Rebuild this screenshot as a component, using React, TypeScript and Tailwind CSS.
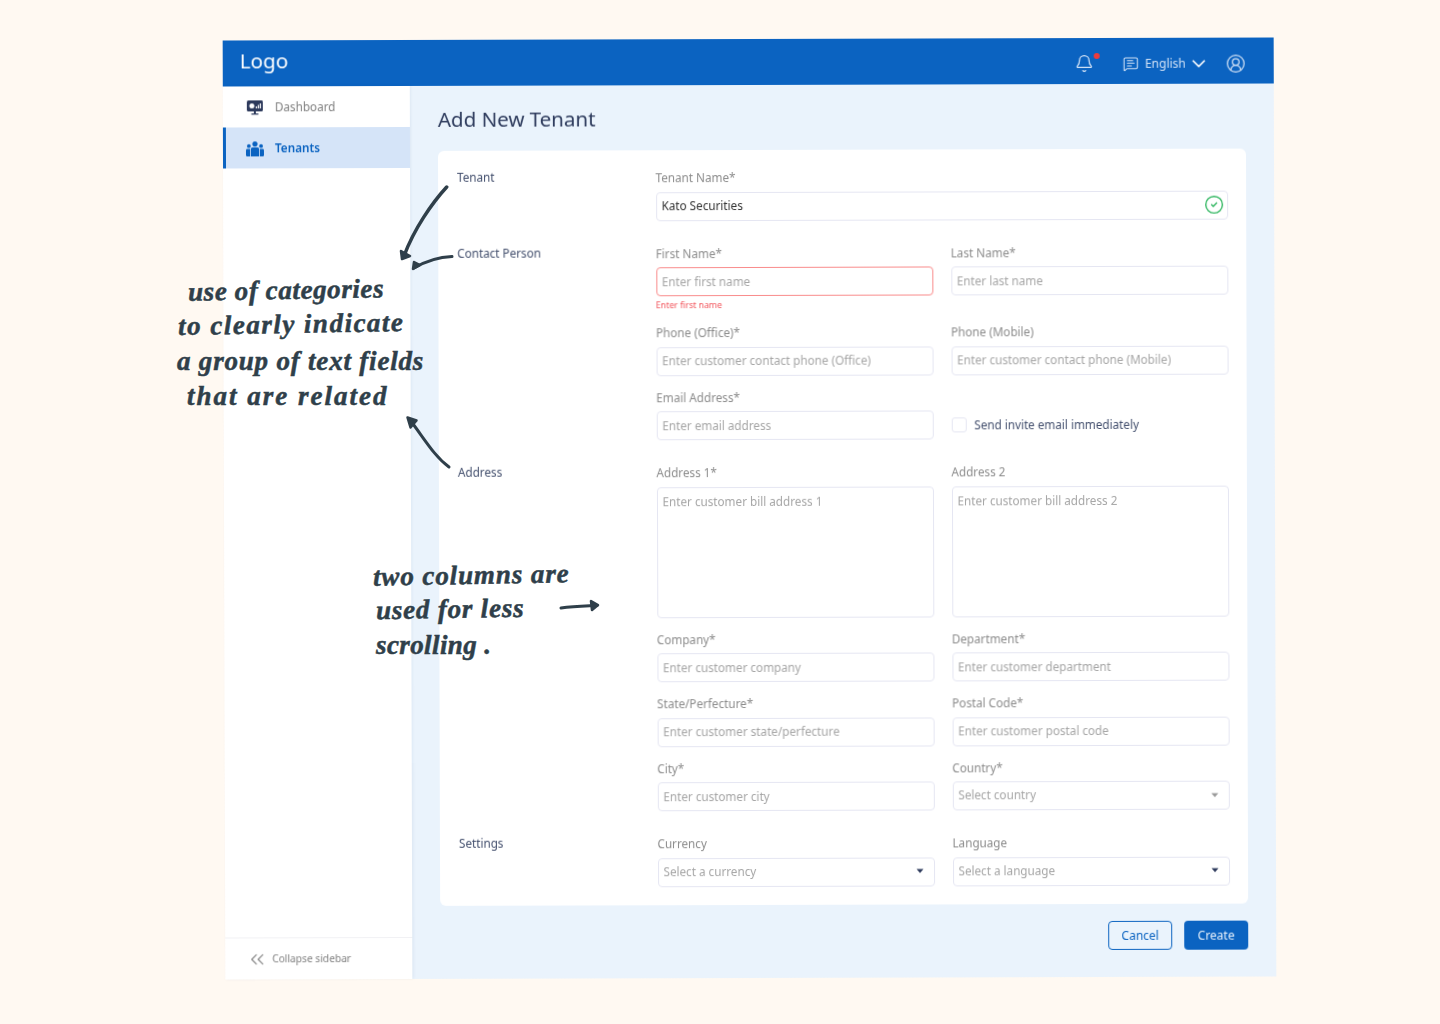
import React from "react";
import { Bell, ChevronDown, ChevronsLeft, CircleCheck, CircleUserRound, MessageSquareText } from "lucide-react";

const labelCls = "block h-4 leading-[14px] mb-[5.5px] text-[11.7px] text-[#8c8c8c]";
const sectionCls = "h-4 leading-[13px] text-[11.7px] text-[#44506e]";
const inputCls =
  "block w-full h-[29px] rounded-[4px] border border-[#e5e6f2] bg-white px-[5px] pb-[2px] text-[11.7px] text-[#333] outline-none placeholder:text-[#a6a6a6]";

const Caret = ({ color }: { color: string }) => (
  <svg width="8" height="5" viewBox="0 0 8 5">
    <path d="M0.5 0.5h7L4 4.5z" fill={color} />
  </svg>
);

const Field = ({ label, placeholder, value, error }: { label: string; placeholder: string; value?: string; error?: string }) => (
  <div>
    <label className={labelCls}>{label}</label>
    <input
      readOnly
      value={value}
      placeholder={placeholder}
      className={`${inputCls} ${error ? "border-[#f98b8b]" : ""}`}
    />
    {error && <div className="mt-[3px] h-3 leading-3 text-[8.75px] text-[#f2545b]">{error}</div>}
  </div>
);

const AreaField = ({ label, placeholder }: { label: string; placeholder: string }) => (
  <div>
    <label className={labelCls}>{label}</label>
    <textarea
      readOnly
      placeholder={placeholder}
      className="block w-full h-[131px] resize-none rounded-[4px] border border-[#e5e6f2] bg-white px-[5px] pt-[5px] text-[11.7px] outline-none placeholder:text-[#a6a6a6]"
    />
  </div>
);

const SelectField = ({ label, placeholder, caret }: { label?: string; placeholder: string; caret: string }) => (
  <div>
    <label className={labelCls}>{label}</label>
    <div className="flex h-[29px] items-center justify-between rounded-[4px] border border-[#e5e6f2] bg-white pl-[5px] pr-[10px] pb-[1px] text-[11.7px] text-[#a6a6a6]">
      {placeholder}
      <Caret color={caret} />
    </div>
  </div>
);

const Section = ({ title, children }: { title: string; children: React.ReactNode }) => (
  <div className="grid grid-cols-[198.5px_1fr]">
    <div className={sectionCls}>{title}</div>
    <div className="grid grid-cols-2 gap-x-[18px] gap-y-[14px]">{children}</div>
  </div>
);

// handwritten notes sit on top of the screenshot, not part of the app itself
const notes = [
  { text: "use of categories", cls: "left-[188px] top-[274px] -rotate-1 tracking-[0.6px]" },
  { text: "to clearly indicate", cls: "left-[178px] top-[308px] -rotate-1 tracking-[1.5px]" },
  { text: "a group of text fields", cls: "left-[177px] top-[345px] tracking-[0.8px]" },
  { text: "that are related", cls: "left-[187px] top-[380px] tracking-[2px]" },
  { text: "two columns are", cls: "left-[373px] top-[559px] -rotate-1 tracking-[0.9px]" },
  { text: "used for less", cls: "left-[376px] top-[593px] -rotate-1 tracking-[0.8px]" },
  { text: "scrolling .", cls: "left-[376px] top-[629px] tracking-[0.4px]" },
];

const Annotations = () => (
  <>
    {notes.map((n) => (
      <div
        key={n.text}
        className={`absolute whitespace-nowrap font-['Liberation_Serif',serif] text-[27px] leading-[32px] font-bold italic text-[#2f3f4a] [-webkit-text-stroke:0.5px_#2f3f4a] ${n.cls}`}
      >
        {n.text}
      </div>
    ))}
    <svg className="absolute left-0 top-0 pointer-events-none" width="1440" height="1024" fill="none" stroke="#2f3f4a" strokeLinecap="round" strokeLinejoin="round">
      <path d="M446.7 187C432 203 414 229 404 256" strokeWidth="3.5" />
      <path d="M402 259l-1-8 9 5z" strokeWidth="2.5" fill="#2f3f4a" />
      <path d="M452 256.5C440 257 426 261 414 268" strokeWidth="3" />
      <path d="M413 269l1-7 6 3z" strokeWidth="2.5" fill="#2f3f4a" />
      <path d="M449 467C434 456 424 438 410 420" strokeWidth="3" />
      <path d="M407.5 417.5l9 3-6 7z" strokeWidth="2.5" fill="#2f3f4a" />
      <path d="M561 608C574 606 586 606 597 605.5" strokeWidth="3" />
      <path d="M598 605l-7-4 1 9z" strokeWidth="2.5" fill="#2f3f4a" />
    </svg>
  </>
);

export default function App() {
  return (
    <div className="relative min-h-screen w-full overflow-hidden bg-[#fff9f2] pt-[38.5px] pl-[223.5px] font-['Noto_Sans',sans-serif]">
      <div className="flex h-[939px] w-[1051px] -rotate-[0.164deg] flex-col bg-[#eaf3fc] blur-[0.35px]">
        <header className="flex h-[46px] shrink-0 items-center justify-between bg-[#0b63c1] pl-[17px] pr-[28px]">
          <div className="pb-[5px] text-[20.7px] leading-none text-white">Logo</div>
          <div className="flex items-center pt-[5px] text-[#d2e2f6]">
            <div className="relative mr-[29px]">
              <Bell size={19} strokeWidth={1.6} />
              <span className="absolute -right-[6px] -top-[1px] h-[6px] w-[6px] rounded-full bg-[#ee3b3b]" />
            </div>
            <MessageSquareText size={16} strokeWidth={1.6} className="mr-[6px]" />
            <span className="text-[12px]">English</span>
            <ChevronDown size={22} strokeWidth={1.9} className="ml-[2px] mr-[16px] text-white" />
            <CircleUserRound size={20} strokeWidth={1.5} />
          </div>
        </header>

        <div className="flex min-h-0 flex-1">
          <aside className="flex w-[187px] shrink-0 flex-col justify-between bg-white shadow-[1px_0_3px_rgba(30,60,110,0.08)]">
            <nav>
              <div className="flex h-[41px] items-center gap-[12px] pl-[24px] pt-[1px] text-[11.7px] text-[#808080]">
                <svg width="16" height="15" viewBox="0 0 16 15">
                  <rect x="0" y="0" width="16" height="11" rx="1.5" fill="#2d3a5c" />
                  <circle cx="5" cy="5.5" r="2.5" fill="#fff" />
                  <path d="M9.5 8V6M11.5 8V4.5M13.5 8V3" stroke="#fff" strokeWidth="1.2" />
                  <path d="M7 11h2v2H7zM4.5 13h7v1.2h-7z" fill="#2d3a5c" />
                </svg>
                Dashboard
              </div>
              <div className="flex h-[41px] items-center gap-[11px] border-l-[3px] border-[#0b63c1] bg-[#d5e4f8] pl-[20px] pt-[1px] text-[11.7px] font-semibold text-[#0b63c1]">
                <svg width="18" height="15" viewBox="0 0 18 15" fill="currentColor">
                  <circle cx="9" cy="2.6" r="2.6" />
                  <circle cx="2.9" cy="4.7" r="1.9" />
                  <circle cx="15.1" cy="4.7" r="1.9" />
                  <path d="M6.6 6h4.8A1.8 1.8 0 0 1 13.2 7.8V15H4.8V7.8A1.8 1.8 0 0 1 6.6 6z" />
                  <path d="M1.3 7.6H4V15H1.2A1.2 1.2 0 0 1 0 13.8V8.9A1.3 1.3 0 0 1 1.3 7.6z" />
                  <path d="M14 7.6h2.7A1.3 1.3 0 0 1 18 8.9v4.9a1.2 1.2 0 0 1-1.2 1.2H14z" />
                </svg>
                Tenants
              </div>
            </nav>
            <div className="flex h-[42px] items-center gap-[4px] border-t border-[#f1f1f4] pl-[21px] text-[10.2px] text-[#808080]">
              <ChevronsLeft size={22} strokeWidth={1.2} />
              Collapse sidebar
            </div>
          </aside>

          <main className="min-w-0 flex-1 pl-[28px] pr-[28px]">
            <h1 className="mt-[18px] mb-[17px] h-[30px] text-[20.5px] leading-[30px] text-[#2d3a5c]">Add New Tenant</h1>

            <div className="flex flex-col gap-[25px] rounded-[6px] bg-white pt-[20px] pb-[18.5px] pl-[19px] pr-[18.5px]">
              <div className="grid grid-cols-[198.5px_1fr]">
                <div className={sectionCls}>Tenant</div>
                <div>
                  <label className={labelCls}>Tenant Name*</label>
                  <div className="relative">
                    <input readOnly value="Kato Securities" className={inputCls} />
                    <CircleCheck size={20} strokeWidth={1.7} className="absolute right-[4px] top-[4px] text-[#35b864]" />
                  </div>
                </div>
              </div>

              <Section title="Contact Person">
                <Field label="First Name*" placeholder="Enter first name" error="Enter first name" />
                <Field label="Last Name*" placeholder="Enter last name" />
                <Field label="Phone (Office)*" placeholder="Enter customer contact phone (Office)" />
                <Field label="Phone (Mobile)" placeholder="Enter customer contact phone (Mobile)" />
                <Field label="Email Address*" placeholder="Enter email address" />
                <div className="flex h-[29px] items-center gap-[8px] self-end">
                  <span className="h-[15px] w-[15px] rounded-[3px] border border-[#e5e6f2]" />
                  <span className="text-[11.7px] text-[#44506e]">Send invite email immediately</span>
                </div>
              </Section>

              <Section title="Address">
                <AreaField label="Address 1*" placeholder="Enter customer bill address 1" />
                <AreaField label="Address 2" placeholder="Enter customer bill address 2" />
                <Field label="Company*" placeholder="Enter customer company" />
                <Field label="Department*" placeholder="Enter customer department" />
                <Field label="State/Perfecture*" placeholder="Enter customer state/perfecture" />
                <Field label="Postal Code*" placeholder="Enter customer postal code" />
                <Field label="City*" placeholder="Enter customer city" />
                <SelectField label="Country*" placeholder="Select country" caret="#9a9a9a" />
              </Section>

              <Section title="Settings">
                <SelectField label="Currency" placeholder="Select a currency" caret="#2d3a5c" />
                <SelectField label="Language" placeholder="Select a language" caret="#2d3a5c" />
              </Section>
            </div>

            <div className="mt-[17px] flex justify-end gap-[12px] text-[12px]">
              <button className="h-[29px] w-[64px] rounded-[4px] border-[1.5px] border-[#0b63c1] text-[#0b63c1]">Cancel</button>
              <button className="h-[29px] w-[64px] rounded-[4px] bg-[#0b63c1] text-[#e6f0fb]">Create</button>
            </div>
          </main>
        </div>
      </div>
      <Annotations />
    </div>
  );
}
